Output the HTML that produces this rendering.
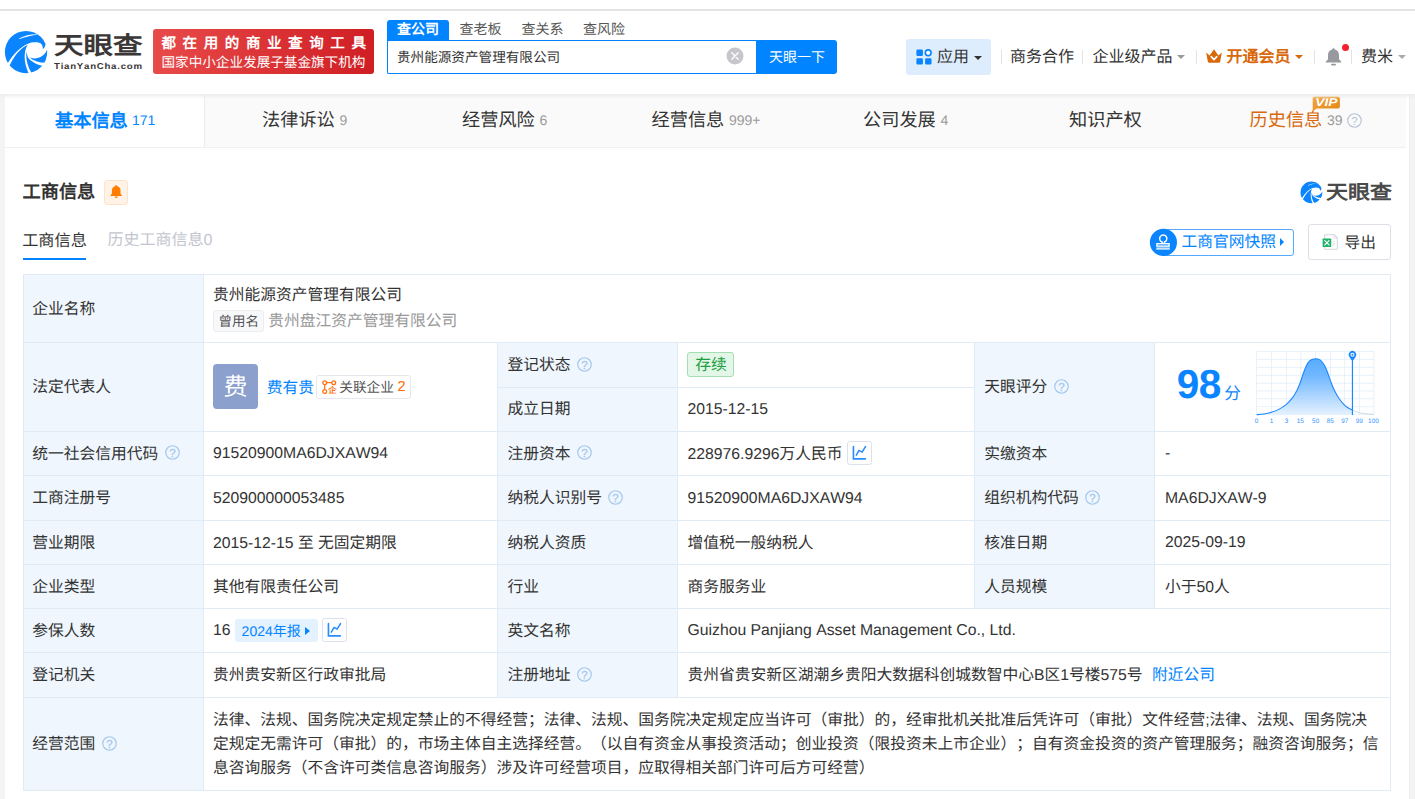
<!DOCTYPE html>
<html lang="zh-CN">
<head>
<meta charset="utf-8">
<title>天眼查</title>
<style>
*{box-sizing:border-box;margin:0;padding:0}
html,body{width:1415px;height:799px;overflow:hidden;background:#fff}
body{text-rendering:geometricPrecision;text-spacing-trim:space-all;font-kerning:none;font-family:"Liberation Sans",sans-serif;color:#333;position:relative;font-size:15.75px}
.abs{position:absolute}
.t{position:absolute;white-space:nowrap;line-height:1;margin-top:1.7px}
/* ---------- header ---------- */
#topline{left:0;top:9px;width:1415px;height:2px;background:#e4e4e4}
#pagebg{left:0;top:94px;width:1415px;height:705px;background:#f4f4f4}
#content{left:5px;top:94px;width:1404px;height:705px;background:#fff}
#hshadow{left:0;top:94px;width:1415px;height:5px;background:linear-gradient(#ededed,rgba(245,245,245,0))}
#banner{left:153px;top:29px;width:221px;height:45px;border-radius:3px;background:linear-gradient(90deg,#e84a4a,#cf1e24);color:#fff}
#stabs .t{font-size:14px;top:20.6px;color:#555}
#sinput{left:387px;top:40px;width:370px;height:34px;border:1px solid #0084ff;border-right:none;border-radius:2px 0 0 2px;background:#fff}
#sbtn{left:756px;top:40px;width:81px;height:34px;background:#0084ff;border-radius:0 3px 3px 0}
.sep{position:absolute;width:1px;height:14px;top:50px;background:#e3e3e3}
.nav{font-size:16px;top:48.2px;color:#333}
.caret{position:absolute;width:0;height:0;border-left:4px solid transparent;border-right:4px solid transparent;border-top:4.5px solid #999}
/* ---------- tabs ---------- */
#tabbar{left:5px;top:94px;width:1401px;height:54px;background:#fafafa;border-bottom:1px solid #f0f0f0}
#tabact{left:5px;top:94px;width:200px;height:53px;background:#fff;border-right:1px solid #ebebeb}
.tab{font-size:18.2px;top:109.3px;color:#333}
.tabn{font-size:14px;top:111.4px;color:#999}
/* ---------- table ---------- */
.lab{position:absolute;background:#eff6fd}
.hl{position:absolute;height:1px;background:#e1ebf6}
.vl{position:absolute;width:1px;background:#e1ebf6}
.c{font-size:15.75px;color:#333}
.q{position:absolute;width:14px;height:14px;border:1.3px solid #b3cbe8;border-radius:50%;color:#a9c4e6;font-size:10.5px;line-height:11.5px;text-align:center;font-weight:bold}
.ibox{position:absolute;width:24.6px;height:23.7px;border:1.1px solid #dbe2ee;border-radius:2.5px;background:#fff}
</style>
</head>
<body>
<div class="abs" id="topline"></div>
<div class="abs" id="pagebg"></div>
<div class="abs" id="content"></div>
<div class="abs" style="left:1409px;top:94px;width:1.3px;height:705px;background:#eeeeee"></div>

<!-- HEADER -->
<div id="header">
<svg class="abs" style="left:0px;top:26px" width="52" height="52" viewBox="0 0 799 799"><defs><clipPath id="lc1"><circle cx="400" cy="400" r="325"/></clipPath></defs>
<g clip-path="url(#lc1)" fill="#0b85ff">
<path d="M110 585 L0 620 L0 0 L799 0 L799 285 L698 283 C694 312 682 340 657 353 C660 312 646 282 620 266 C580 242 492 246 430 272 C320 320 210 420 110 585Z"/>
<path d="M428 290 C330 336 238 426 150 600 L100 799 L450 799 L436 718 C390 620 366 500 385 402 C392 352 410 312 428 290Z"/>
<path d="M408 395 C394 480 412 600 482 718 L500 799 L799 799 L799 600 L650 610 C596 602 516 572 440 500 C424 470 412 432 408 395Z"/>
<path d="M718 372 L799 372 L799 570 L700 566 C610 566 520 540 447 480 C500 506 582 506 640 466 C680 440 706 410 718 372Z"/>
</g>
<path d="M291 191 C380 150 480 124 584 129 C490 141 400 162 300 199Z" fill="#fff"/></svg>
<div class="t" style="left:53.6px;top:33.6px;font-size:24.4px;font-weight:bold;color:#3b3737;transform:scaleX(1.21);transform-origin:0 0;letter-spacing:0">天眼查</div>
<div class="t" style="left:54.3px;top:60.6px;font-size:8.6px;font-weight:bold;color:#3b3737;letter-spacing:0.68px;transform:scaleX(1.12);transform-origin:0 0">TianYanCha.com</div>
<div class="abs" id="banner">
<div class="t" style="left:8.5px;top:6px;font-size:14.5px;font-weight:bold;letter-spacing:6.6px">都在用的商业查询工具</div>
<div class="t" style="left:8.5px;top:25px;font-size:13.6px;letter-spacing:0">国家中小企业发展子基金旗下机构</div>
</div>
<div id="stabs">
<div class="abs" style="left:387px;top:20px;width:62px;height:21px;background:#0084ff;border-radius:3px 3px 0 0"></div>
<div class="t" style="left:397px;color:#fff;font-weight:bold">查公司</div>
<div class="t" style="left:459.5px">查老板</div>
<div class="t" style="left:521.5px">查关系</div>
<div class="t" style="left:583px">查风险</div>
</div>
<div class="abs" id="sinput"></div>
<div class="t" style="left:397px;top:49.5px;font-size:13.6px;color:#333">贵州能源资产管理有限公司</div>
<svg class="abs" style="left:726px;top:47px" width="18" height="18" viewBox="0 0 18 18"><circle cx="9" cy="9" r="8.5" fill="#c6c7cc"/><path d="M5.8 5.8L12.2 12.2M12.2 5.8L5.8 12.2" stroke="#fff" stroke-width="1.3" stroke-linecap="round"/></svg>
<div class="abs" id="sbtn"></div>
<div class="t" style="left:769px;top:48px;font-size:14px;color:#fff">天眼一下</div>
<div class="abs" style="left:906px;top:39px;width:85px;height:36px;background:#deedfd;border-radius:3px"></div>
<svg class="abs" style="left:916px;top:49px" width="16" height="16" viewBox="0 0 16 16"><rect x="0.4" y="0.6" width="6.5" height="6.3" rx="1.2" fill="#0a84ff"/><rect x="0.4" y="9.2" width="6.5" height="6.2" rx="1.2" fill="#0a84ff"/><rect x="9.1" y="9.2" width="6.4" height="6.2" rx="1.2" fill="#0a84ff"/><circle cx="12.2" cy="3.8" r="2.9" fill="#fff" stroke="#0a84ff" stroke-width="1.6"/></svg>
<div class="t nav" style="left:937px">应用</div>
<div class="caret" style="left:974px;top:55.5px;border-top-color:#333"></div>
<div class="sep" style="left:1001px"></div>
<div class="t nav" style="left:1010px">商务合作</div>
<div class="sep" style="left:1082px"></div>
<div class="t nav" style="left:1092.5px">企业级产品</div>
<div class="caret" style="left:1177px;top:54.5px"></div>
<div class="sep" style="left:1196px"></div>
<svg class="abs" style="left:1206px;top:49px" width="16" height="14" viewBox="0 0 16 14"><path d="M0.2 3.6 L3.6 6.6 L8 0.2 L12.4 6.6 L15.8 3.6 L14.2 12.6 Q14 13.8 12.8 13.8 L3.2 13.8 Q2 13.8 1.8 12.6 Z" fill="#d9680b"/><path d="M5.2 7.6 L8 10.6 L10.8 7.6" fill="none" stroke="#fff" stroke-width="1.6" stroke-linejoin="round" stroke-linecap="round"/></svg>
<div class="t nav" style="left:1226.5px;color:#d9680b;font-weight:bold">开通会员</div>
<div class="caret" style="left:1295px;top:54.5px;border-top-color:#d9680b"></div>
<div class="sep" style="left:1314px"></div>
<svg class="abs" style="left:1325px;top:48px" width="17" height="18" viewBox="0 0 17 18"><path d="M8.5 0.3 C9.3 0.3 9.8 0.9 9.8 1.6 C12.6 2.3 14 4.6 14 7.4 L14 11.2 L16.2 13.6 L16.2 14.6 L0.8 14.6 L0.8 13.6 L3 11.2 L3 7.4 C3 4.6 4.4 2.3 7.2 1.6 C7.2 0.9 7.7 0.3 8.5 0.3Z" fill="#97999e"/><rect x="6" y="15.8" width="5" height="1.6" rx="0.8" fill="#97999e"/></svg>
<div class="abs" style="left:1342px;top:43.6px;width:7px;height:7px;border-radius:50%;background:#f5222d"></div>
<div class="sep" style="left:1351px"></div>
<div class="t nav" style="left:1361px">费米</div>
<div class="caret" style="left:1398px;top:54.5px;border-top-color:#aaa"></div>
</div>

<!-- TABS -->
<div class="abs" id="tabbar"></div>
<div class="abs" id="tabact"></div>
<div class="t tab" style="left:55px;top:110px;color:#0084ff;font-weight:bold">基本信息</div><div class="t tabn" style="left:132px;color:#0084ff">171</div>
<div class="t tab" style="left:262px">法律诉讼</div><div class="t tabn" style="left:339.5px">9</div>
<div class="t tab" style="left:462px">经营风险</div><div class="t tabn" style="left:539.5px">6</div>
<div class="t tab" style="left:651.5px">经营信息</div><div class="t tabn" style="left:729px">999+</div>
<div class="t tab" style="left:863px">公司发展</div><div class="t tabn" style="left:940.5px">4</div>
<div class="t tab" style="left:1069px">知识产权</div>
<div class="t tab" style="left:1249.5px;color:#d9680b">历史信息</div><div class="t tabn" style="left:1327px">39</div>
<svg class="abs" style="left:1346.9px;top:112.6px" width="15" height="15" viewBox="0 0 15 15"><circle cx="7.5" cy="7.5" r="6.75" fill="none" stroke="#b5c3d6" stroke-width="1.15"/><text x="7.5" y="11.6" font-family="Liberation Sans, sans-serif" font-size="11.5" fill="#b5c3d6" text-anchor="middle">?</text></svg>
<svg class="abs" style="left:1312.2px;top:96.1px" width="29" height="16" viewBox="0 0 29 16"><defs><linearGradient id="vg" x1="0" y1="0" x2="1" y2="1"><stop offset="0" stop-color="#f2a640"/><stop offset="1" stop-color="#e38615"/></linearGradient></defs><path d="M2.6 0.4 H25.8 Q27.9 0.4 27.9 2.5 V10.4 Q27.9 12.5 25.8 12.5 H4.6 L0.7 15.4 V2.5 Q0.7 0.4 2.6 0.4Z" fill="url(#vg)"/><text x="3.2" y="9.9" font-family="Liberation Sans, sans-serif" font-size="11.2" font-weight="bold" font-style="italic" fill="#fff" textLength="22.3" lengthAdjust="spacingAndGlyphs">VIP</text></svg>

<!-- SECTION -->
<div class="t" style="left:22.5px;top:181.8px;font-size:18.2px;font-weight:bold;color:#333">工商信息</div>
<div class="abs" style="left:104px;top:180px;width:24px;height:24.5px;background:#fff3e8;border:1px solid #ffe2c8;border-radius:3px"></div>
<svg class="abs" style="left:109.7px;top:184.8px" width="12.4" height="13.6" viewBox="0 0 13 15" preserveAspectRatio="none"><path d="M6.5 0.4 C7.2 0.4 7.6 0.9 7.6 1.4 C9.9 2 11 3.9 11 6.2 L11 9.4 L12.4 11.2 L12.4 12 L0.6 12 L0.6 11.2 L2 9.4 L2 6.2 C2 3.9 3.1 2 5.4 1.4 C5.4 0.9 5.8 0.4 6.5 0.4Z" fill="#ff7d00"/><path d="M4.8 12.8 H8.2 Q7.8 14.4 6.5 14.4 Q5.2 14.4 4.8 12.8Z" fill="#ff7d00"/></svg>
<div class="t" style="left:22.2px;top:231.5px;font-size:16.2px;color:#333">工商信息</div>
<div class="abs" style="left:23px;top:258px;width:63px;height:2px;background:#0084ff"></div>
<div class="t" style="left:107.5px;top:231.5px;font-size:16px;color:#c3c6cf">历史工商信息0</div>
<!-- watermark logo -->
<svg class="abs" style="left:1298.18px;top:178.68px" width="26.80" height="26.80" viewBox="0 0 799 799"><defs><clipPath id="lc2"><circle cx="400" cy="400" r="325"/></clipPath></defs>
<g clip-path="url(#lc2)" fill="#0b85ff">
<path d="M110 585 L0 620 L0 0 L799 0 L799 285 L698 283 C694 312 682 340 657 353 C660 312 646 282 620 266 C580 242 492 246 430 272 C320 320 210 420 110 585Z"/>
<path d="M428 290 C330 336 238 426 150 600 L100 799 L450 799 L436 718 C390 620 366 500 385 402 C392 352 410 312 428 290Z"/>
<path d="M408 395 C394 480 412 600 482 718 L500 799 L799 799 L799 600 L650 610 C596 602 516 572 440 500 C424 470 412 432 408 395Z"/>
<path d="M718 372 L799 372 L799 570 L700 566 C610 566 520 540 447 480 C500 506 582 506 640 466 C680 440 706 410 718 372Z"/>
</g>
<path d="M291 191 C380 150 480 124 584 129 C490 141 400 162 300 199Z" fill="#fff"/></svg>
<div class="t" style="left:1326px;top:182.3px;font-size:19.6px;font-weight:bold;color:#4a4a4a;transform:scaleX(1.12);transform-origin:0 0">天眼查</div>
<!-- snapshot button -->
<div class="abs" style="left:1160px;top:229px;width:134px;height:26.8px;border:1px solid #55a9ff;border-radius:3px;background:#fff"></div>
<svg class="abs" style="left:1145px;top:222px" width="40" height="40" viewBox="0 0 799 799"><circle cx="368" cy="408" r="271" fill="#0b85ff"/><g fill="none" stroke="#fff" stroke-width="28"><path d="M343 432V400A72 72 0 1 1 387 400V432"/><rect x="239" y="434" width="242" height="48"/></g><rect x="225" y="508" width="270" height="46" fill="#fff" opacity="0.78"/></svg>
<div class="t" style="left:1181.5px;top:233.5px;font-size:15.75px;color:#0084ff">工商官网快照</div>
<div class="abs" style="left:1280px;top:238px;width:0;height:0;border-top:4px solid transparent;border-bottom:4px solid transparent;border-left:4.5px solid #0084ff"></div>
<!-- export button -->
<div class="abs" style="left:1308px;top:224.2px;width:83px;height:35.8px;border:1px solid #dcdfe6;border-radius:3px;background:#fff"></div>
<svg class="abs" style="left:1315px;top:226px" width="32" height="32" viewBox="0 0 799 799"><path d="M262 218H480L558 296V560Q558 582 536 582H262Q240 582 240 560V240Q240 218 262 218Z" fill="#fff" stroke="#d3d6de" stroke-width="26" stroke-linejoin="round"/><path d="M472 222V284Q472 304 492 304H554" fill="none" stroke="#d3d6de" stroke-width="22"/><path d="M432 385H498M432 435H498M432 478H498" stroke="#d9dbe2" stroke-width="22"/><rect x="190" y="310" width="215" height="215" rx="22" fill="#1fb26b"/><path d="M245 365L350 470M350 365L245 470" stroke="#fff" stroke-width="30" stroke-linecap="round"/></svg>
<div class="t" style="left:1344.5px;top:234px;font-size:15.75px;color:#333">导出</div>

<!-- TABLE -->
<div class="lab" style="left:23px;top:274px;width:180px;height:516px"></div>
<div class="lab" style="left:497px;top:342px;width:180px;height:355px"></div>
<div class="lab" style="left:974px;top:342px;width:180px;height:266px"></div>
<div class="hl" style="left:23px;top:274px;width:1368px"></div>
<div class="hl" style="left:23px;top:342px;width:1368px"></div>
<div class="hl" style="left:497px;top:387px;width:477px"></div>
<div class="hl" style="left:23px;top:431px;width:1368px"></div>
<div class="hl" style="left:23px;top:475px;width:1368px"></div>
<div class="hl" style="left:23px;top:520px;width:1368px"></div>
<div class="hl" style="left:23px;top:564px;width:1368px"></div>
<div class="hl" style="left:23px;top:608px;width:1368px"></div>
<div class="hl" style="left:23px;top:652px;width:1368px"></div>
<div class="hl" style="left:23px;top:697px;width:1368px"></div>
<div class="hl" style="left:23px;top:790px;width:1368px"></div>
<div class="vl" style="left:23px;top:274px;height:517px"></div>
<div class="vl" style="left:1390px;top:274px;height:517px"></div>
<div class="vl" style="left:203px;top:274px;height:517px"></div>
<div class="vl" style="left:497px;top:342px;height:355px"></div>
<div class="vl" style="left:677px;top:342px;height:355px"></div>
<div class="vl" style="left:974px;top:342px;height:266px"></div>
<div class="vl" style="left:1154px;top:342px;height:266px"></div>
<div class="t c" style="left:32.3px;top:300.2px;">企业名称</div>
<div class="t c" style="left:213px;top:286.5px;">贵州能源资产管理有限公司</div>
<div class="abs" style="left:213px;top:310px;width:51px;height:22px;background:#f7f8fa;border:1px solid #ecedf1;border-radius:3px"></div>
<div class="t" style="left:218.5px;top:313px;font-size:13.5px;color:#555">曾用名</div>
<div class="t c" style="left:268.3px;top:312.3px;color:#999">贵州盘江资产管理有限公司</div>
<div class="t c" style="left:32.3px;top:378.7px;">法定代表人</div>
<div class="abs" style="left:213px;top:364px;width:45px;height:45px;background:#8ba0cd;border-radius:4px"></div>
<div class="t" style="left:223.5px;top:374.5px;font-size:24px;color:#fff">费</div>
<div class="t c" style="left:266.8px;top:379.4px;color:#0084ff">费有贵</div>
<div class="abs" style="left:316px;top:375.2px;width:95px;height:23.6px;border:1px solid #e4e7ec;border-radius:3px;background:#fff"></div>
<svg class="abs" style="left:322.3px;top:380px" width="15" height="15" viewBox="0 0 15 15"><g fill="none" stroke="#ff7212" stroke-width="1.3"><circle cx="2.7" cy="2.7" r="1.9"/><circle cx="11.7" cy="2.7" r="1.9"/><circle cx="2.7" cy="11.5" r="1.9"/><path d="M4.6 2.7H9.8M2.7 4.6V9.6"/></g><text x="6.2" y="13.4" font-family="Liberation Sans, sans-serif" font-size="8.2" font-weight="bold" fill="#ff7212">企</text></svg>
<div class="t" style="left:339.3px;top:379.4px;font-size:13.65px;color:#555">关联企业</div>
<div class="t" style="left:397.4px;top:378.6px;font-size:14.5px;color:#ff6a00">2</div>
<div class="t c" style="left:507.5px;top:356.7px;">登记状态</div>
<svg class="abs" style="left:576.9px;top:356.6px" width="15" height="15" viewBox="0 0 15 15"><circle cx="7.5" cy="7.5" r="6.75" fill="none" stroke="#a3c7ee" stroke-width="1.2"/><text x="7.5" y="11.6" font-family="Liberation Sans, sans-serif" font-size="11.5" fill="#a3c7ee" stroke="#a3c7ee" stroke-width="0.25" text-anchor="middle">?</text></svg>
<div class="t c" style="left:507.5px;top:400.4px;">成立日期</div>
<div class="abs" style="left:687px;top:352.4px;width:47px;height:24.3px;background:#e3f7e8;border:1px solid #a3deb2;border-radius:3px"></div>
<div class="t c" style="left:695.2px;top:356.6px;color:#1b9e3e">存续</div>
<div class="t c" style="left:687.5px;top:399.9px;">2015-12-15</div>
<div class="t c" style="left:984.2px;top:378.7px;">天眼评分</div>
<svg class="abs" style="left:1053.6px;top:378.6px" width="15" height="15" viewBox="0 0 15 15"><circle cx="7.5" cy="7.5" r="6.75" fill="none" stroke="#a3c7ee" stroke-width="1.2"/><text x="7.5" y="11.6" font-family="Liberation Sans, sans-serif" font-size="11.5" fill="#a3c7ee" stroke="#a3c7ee" stroke-width="0.25" text-anchor="middle">?</text></svg>
<div class="t" style="left:1176.8px;top:362.7px;font-size:40.5px;font-weight:bold;color:#0a84ff;letter-spacing:-0.5px">98</div>
<div class="t" style="left:1224.2px;top:384.6px;font-size:16.6px;color:#0a84ff">分</div>
<svg class="abs" style="left:1250px;top:345px" width="135" height="85" viewBox="0 0 1269 799">
<defs><linearGradient id="bg1" x1="0" y1="0" x2="0" y2="1"><stop offset="0" stop-color="#4aa5ff"/><stop offset="0.3" stop-color="#64b1ff"/><stop offset="1" stop-color="#e2f0ff"/></linearGradient></defs>
<path d="M62 60V655M203 60V655M343 60V655M478 60V655M616 60V655M757 60V655M890 60V655M1030 60V655M1165 60V655M62 60H1165M62 135H1165M62 210H1165M62 285H1165M62 360H1165M62 432H1165M62 505H1165M62 580H1165M62 655H1165" stroke="#e6f0fb" stroke-width="9" fill="none"/>
<path d="M62 655 C73 654 107 652 130 648 C153 644 177 639 200 632 C223 625 247 617 270 605 C293 593 318 578 340 560 C362 542 383 517 400 495 C417 473 428 452 440 430 C452 408 460 387 470 360 C480 333 490 298 500 270 C510 242 520 215 530 195 C540 175 550 160 560 150 C570 140 581 136 590 133 C599 130 607 130 616 130 C625 130 635 131 645 135 C655 139 665 144 675 155 C685 166 695 180 705 200 C715 220 725 248 735 275 C745 302 755 334 765 360 C775 386 783 407 795 430 C807 453 821 479 835 500 C849 521 866 540 880 555 C894 570 906 580 920 590 C934 600 956 608 963 612 L963 655 L62 655Z" fill="url(#bg1)" opacity="0.92"/>
<path d="M963 612 C969 615 984 623 1000 628 C1016 633 1032 639 1060 643 C1088 647 1148 651 1165 653" stroke="#c5d0dc" stroke-width="8" fill="none"/>
<path d="M62 655 C73 654 107 652 130 648 C153 644 177 639 200 632 C223 625 247 617 270 605 C293 593 318 578 340 560 C362 542 383 517 400 495 C417 473 428 452 440 430 C452 408 460 387 470 360 C480 333 490 298 500 270 C510 242 520 215 530 195 C540 175 550 160 560 150 C570 140 581 136 590 133 C599 130 607 130 616 130 C625 130 635 131 645 135 C655 139 665 144 675 155 C685 166 695 180 705 200 C715 220 725 248 735 275 C745 302 755 334 765 360 C775 386 783 407 795 430 C807 453 821 479 835 500 C849 521 866 540 880 555 C894 570 906 580 920 590 C934 600 956 608 963 612" stroke="#1a86ff" stroke-width="10" fill="none"/>
<path d="M963 150V658" stroke="#1a86ff" stroke-width="11"/>
<path d="M963 156 L936 114 A35 35 0 1 1 990 114Z" fill="#1a86ff"/>
<circle cx="963" cy="92" r="19" fill="#fff"/><circle cx="963" cy="92" r="9.5" fill="#1a86ff"/>
<g font-family="Liberation Sans, sans-serif" font-size="60" fill="#2f93ff"><text x="62" y="730" text-anchor="middle">0</text><text x="203" y="730" text-anchor="middle">1</text><text x="343" y="730" text-anchor="middle">3</text><text x="472" y="730" text-anchor="middle">15</text><text x="617" y="730" text-anchor="middle">50</text><text x="755" y="730" text-anchor="middle">85</text><text x="890" y="730" text-anchor="middle">97</text><text x="1028" y="730" text-anchor="middle">99</text><text x="1160" y="730" text-anchor="middle">100</text></g>
</svg>
<div class="t c" style="left:32.3px;top:445.2px;">统一社会信用代码</div>
<div class="t c" style="left:213px;top:444.5px;">91520900MA6DJXAW94</div>
<div class="t c" style="left:507.5px;top:445.2px;">注册资本</div>
<div class="t c" style="left:687.5px;top:445.2px;">228976.9296万人民币</div>
<div class="t c" style="left:984.2px;top:445.2px;">实缴资本</div>
<div class="t c" style="left:1165px;top:444.5px;">-</div>
<svg class="abs" style="left:165.1px;top:445.1px" width="15" height="15" viewBox="0 0 15 15"><circle cx="7.5" cy="7.5" r="6.75" fill="none" stroke="#a3c7ee" stroke-width="1.2"/><text x="7.5" y="11.6" font-family="Liberation Sans, sans-serif" font-size="11.5" fill="#a3c7ee" stroke="#a3c7ee" stroke-width="0.25" text-anchor="middle">?</text></svg>
<svg class="abs" style="left:576.9px;top:445.1px" width="15" height="15" viewBox="0 0 15 15"><circle cx="7.5" cy="7.5" r="6.75" fill="none" stroke="#a3c7ee" stroke-width="1.2"/><text x="7.5" y="11.6" font-family="Liberation Sans, sans-serif" font-size="11.5" fill="#a3c7ee" stroke="#a3c7ee" stroke-width="0.25" text-anchor="middle">?</text></svg>
<div class="t c" style="left:32.3px;top:489.7px;">工商注册号</div>
<div class="t c" style="left:213px;top:489.0px;">520900000053485</div>
<div class="t c" style="left:507.5px;top:489.7px;">纳税人识别号</div>
<div class="t c" style="left:687.5px;top:489.0px;">91520900MA6DJXAW94</div>
<div class="t c" style="left:984.2px;top:489.7px;">组织机构代码</div>
<div class="t c" style="left:1165px;top:489.0px;">MA6DJXAW-9</div>
<svg class="abs" style="left:608.4px;top:489.6px" width="15" height="15" viewBox="0 0 15 15"><circle cx="7.5" cy="7.5" r="6.75" fill="none" stroke="#a3c7ee" stroke-width="1.2"/><text x="7.5" y="11.6" font-family="Liberation Sans, sans-serif" font-size="11.5" fill="#a3c7ee" stroke="#a3c7ee" stroke-width="0.25" text-anchor="middle">?</text></svg>
<svg class="abs" style="left:1085.1px;top:489.6px" width="15" height="15" viewBox="0 0 15 15"><circle cx="7.5" cy="7.5" r="6.75" fill="none" stroke="#a3c7ee" stroke-width="1.2"/><text x="7.5" y="11.6" font-family="Liberation Sans, sans-serif" font-size="11.5" fill="#a3c7ee" stroke="#a3c7ee" stroke-width="0.25" text-anchor="middle">?</text></svg>
<div class="t c" style="left:32.3px;top:534.2px;">营业期限</div>
<div class="t c" style="left:213px;top:534.2px;">2015-12-15 至 无固定期限</div>
<div class="t c" style="left:507.5px;top:534.2px;">纳税人资质</div>
<div class="t c" style="left:687.5px;top:534.2px;">增值税一般纳税人</div>
<div class="t c" style="left:984.2px;top:534.2px;">核准日期</div>
<div class="t c" style="left:1165px;top:533.5px;">2025-09-19</div>
<div class="t c" style="left:32.3px;top:578.2px;">企业类型</div>
<div class="t c" style="left:213px;top:578.2px;">其他有限责任公司</div>
<div class="t c" style="left:507.5px;top:578.2px;">行业</div>
<div class="t c" style="left:687.5px;top:578.2px;">商务服务业</div>
<div class="t c" style="left:984.2px;top:578.2px;">人员规模</div>
<div class="t c" style="left:1165px;top:578.2px;">小于50人</div>
<div class="ibox" style="left:847.2px;top:441.1px"><svg width="23" height="22" viewBox="0 0 23 22" fill="none" stroke="#2b8cff" stroke-width="1.65" style="position:absolute;left:0;top:0"><path d="M5.45 4.6V16.8H17.4" stroke-linecap="round" stroke-linejoin="miter"/><path d="M8.3 13.2L11.1 8.45L14.1 10.2L17.5 4.6" stroke-linejoin="round" stroke-linecap="round" stroke-width="1.55"/></svg></div>
<div class="t c" style="left:32.3px;top:622.2px;">参保人数</div>
<div class="t c" style="left:213px;top:621.5px;">16</div>
<div class="abs" style="left:235px;top:619.2px;width:83px;height:23.3px;background:#e4f1ff;border-radius:3px"></div>
<div class="t" style="left:241.6px;top:622.1px;font-size:14px;color:#0084ff">2024年报</div>
<div class="abs" style="left:304.5px;top:626.7px;width:0;height:0;border-top:4px solid transparent;border-bottom:4px solid transparent;border-left:5px solid #0084ff"></div>
<div class="ibox" style="left:322.3px;top:618.1px"><svg width="23" height="22" viewBox="0 0 23 22" fill="none" stroke="#2b8cff" stroke-width="1.65" style="position:absolute;left:0;top:0"><path d="M5.45 4.6V16.8H17.4" stroke-linecap="round" stroke-linejoin="miter"/><path d="M8.3 13.2L11.1 8.45L14.1 10.2L17.5 4.6" stroke-linejoin="round" stroke-linecap="round" stroke-width="1.55"/></svg></div>
<div class="t c" style="left:507.5px;top:622.2px;">英文名称</div>
<div class="t c" style="left:687.5px;top:621.5px;">Guizhou Panjiang Asset Management Co., Ltd.</div>
<div class="t c" style="left:32.3px;top:666.7px;">登记机关</div>
<div class="t c" style="left:213px;top:666.7px;">贵州贵安新区行政审批局</div>
<div class="t c" style="left:507.5px;top:666.7px;">注册地址</div>
<svg class="abs" style="left:576.9px;top:666.6px" width="15" height="15" viewBox="0 0 15 15"><circle cx="7.5" cy="7.5" r="6.75" fill="none" stroke="#a3c7ee" stroke-width="1.2"/><text x="7.5" y="11.6" font-family="Liberation Sans, sans-serif" font-size="11.5" fill="#a3c7ee" stroke="#a3c7ee" stroke-width="0.25" text-anchor="middle">?</text></svg>
<div class="t c" style="left:687.5px;top:666.7px;">贵州省贵安新区湖潮乡贵阳大数据科创城数智中心B区1号楼575号</div>
<div class="t c" style="left:1152px;top:666.7px;color:#0084ff">附近公司</div>
<div class="t c" style="left:32.3px;top:735.7px;">经营范围</div>
<svg class="abs" style="left:101.7px;top:735.6px" width="15" height="15" viewBox="0 0 15 15"><circle cx="7.5" cy="7.5" r="6.75" fill="none" stroke="#a3c7ee" stroke-width="1.2"/><text x="7.5" y="11.6" font-family="Liberation Sans, sans-serif" font-size="11.5" fill="#a3c7ee" stroke="#a3c7ee" stroke-width="0.25" text-anchor="middle">?</text></svg>
<div class="t c" style="left:213px;top:710.9px;">法律、法规、国务院决定规定禁止的不得经营；法律、法规、国务院决定规定应当许可（审批）的，经审批机关批准后凭许可（审批）文件经营;法律、法规、国务院决</div>
<div class="t c" style="left:213px;top:735.1px;">定规定无需许可（审批）的，市场主体自主选择经营。（以自有资金从事投资活动；创业投资（限投资未上市企业）；自有资金投资的资产管理服务；融资咨询服务；信</div>
<div class="t c" style="left:213px;top:759.3px;">息咨询服务（不含许可类信息咨询服务）涉及许可经营项目，应取得相关部门许可后方可经营）</div>

<div class="abs" id="hshadow"></div>
</body>
</html>
